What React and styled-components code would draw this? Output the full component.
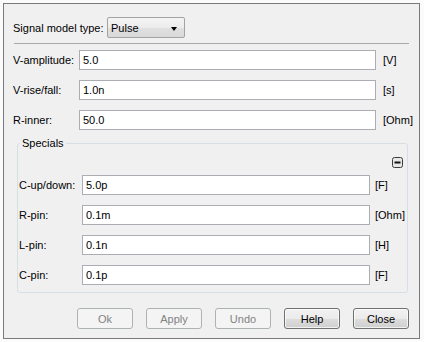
import React from 'react'
import styled, { createGlobalStyle } from 'styled-components'

const GlobalStyle = createGlobalStyle`
  html, body {
    margin: 0;
    padding: 0;
    background: #fbfbfb;
  }
  body {
    font-family: "Liberation Sans", Arial, sans-serif;
    font-size: 11px;
    color: #000;
  }
`

const Frame = styled.div`
  box-sizing: border-box;
  width: 417px;
  height: 336px;
  margin: 3px 0 0 3px;
  border: 1px solid #7a7a7a;
  background: #f0f0f0;
  padding: 13px 10px 0 9px;
  display: flex;
  flex-direction: column;
`

const TopRow = styled.div`
  display: flex;
  align-items: center;
  height: 21px;
`

const TopLabel = styled.span`
  width: 94px;
  white-space: nowrap;
`

const Combo = styled.div`
  box-sizing: border-box;
  width: 78px;
  height: 21px;
  border: 1px solid #a3a3a3;
  border-radius: 2px;
  background: linear-gradient(#f4f4f4 0%, #ececec 50%, #e0e0e0 51%, #d9d9d9 100%);
  display: flex;
  align-items: center;
  justify-content: space-between;
  padding: 0 7px 0 3px;
`

const Arrow = styled.span`
  width: 0;
  height: 0;
  border-left: 3.5px solid transparent;
  border-right: 3.5px solid transparent;
  border-top: 4px solid #000;
  margin-top: 2px;
`

const Separator = styled.div`
  height: 1px;
  background: #a9a9a9;
  margin: 5px 0 6px 1px;
`

const Fields = styled.div`
  display: grid;
  grid-template-columns: ${p => p.$label}px 1fr ${p => p.$unit}px;
  grid-auto-rows: 20px;
  row-gap: 10px;
  align-items: center;
`

const Label = styled.span`
  white-space: nowrap;
`

const Input = styled.input`
  box-sizing: border-box;
  height: 20px;
  width: 100%;
  margin: 0;
  border: 1px solid #abadb3;
  background: #fff;
  font: inherit;
  padding: 0 3px;
  outline: none;
`

const Unit = styled.span`
  padding-left: ${p => p.$gap}px;
  white-space: nowrap;
`

const Group = styled.fieldset`
  margin: 7px 1px 0 4px;
  padding: 0 0 7px 1px;
  border: 1px solid #d5dfe5;
  border-radius: 3px;
`

const Legend = styled.legend`
  margin-left: 1px;
  padding: 0 2px;
  line-height: 13px;
`

const GroupHeader = styled.div`
  display: flex;
  justify-content: flex-end;
  height: 11px;
  margin: 7px 4px 7px 0;
`

const CollapseButton = styled.svg`
  display: block;
`

const Buttons = styled.div`
  display: flex;
  justify-content: flex-end;
  gap: 13px;
  margin-top: 15px;
`

const Button = styled.button`
  box-sizing: border-box;
  width: 56px;
  height: 21px;
  margin: 0;
  padding: 0;
  font: inherit;
  border-radius: 3px;
  border: 1px solid ${p => (p.disabled ? '#adb2b5' : '#707070')};
  color: ${p => (p.disabled ? '#838383' : '#000')};
  background: ${p =>
    p.disabled
      ? '#f4f4f4'
      : 'linear-gradient(#f2f2f2 0%, #ebebeb 50%, #dddddd 51%, #cfcfcf 100%)'};
  box-shadow: ${p => (p.disabled ? 'none' : 'inset 0 0 0 1px rgba(255,255,255,0.7)')};
`

const mainFields = [
  { label: 'V-amplitude:', value: '5.0', unit: '[V]' },
  { label: 'V-rise/fall:', value: '1.0n', unit: '[s]' },
  { label: 'R-inner:', value: '50.0', unit: '[Ohm]' },
]

const specialFields = [
  { label: 'C-up/down:', value: '5.0p', unit: '[F]' },
  { label: 'R-pin:', value: '0.1m', unit: '[Ohm]' },
  { label: 'L-pin:', value: '0.1n', unit: '[H]' },
  { label: 'C-pin:', value: '0.1p', unit: '[F]' },
]

const FieldList = ({ fields, label, unit, gap }) => (
  <Fields $label={label} $unit={unit}>
    {fields.map(f => (
      <React.Fragment key={f.label}>
        <Label>{f.label}</Label>
        <Input defaultValue={f.value} />
        <Unit $gap={gap}>{f.unit}</Unit>
      </React.Fragment>
    ))}
  </Fields>
)

export default function App() {
  return (
    <>
      <GlobalStyle />
      <Frame>
        <TopRow>
          <TopLabel>Signal model type:</TopLabel>
          <Combo>
            <span>Pulse</span>
            <Arrow />
          </Combo>
        </TopRow>
        <Separator />
        <FieldList fields={mainFields} label={66} unit={33} gap={7} />
        <Group>
          <Legend>Specials</Legend>
          <GroupHeader>
            <CollapseButton width="11" height="11" viewBox="0 0 11 11">
              <rect x="0.5" y="0.5" width="10" height="10" rx="2" fill="#e8e8e8" stroke="#3a3a3a" />
              <rect x="2.5" y="4.5" width="6" height="2" fill="#111" />
            </CollapseButton>
          </GroupHeader>
          <FieldList fields={specialFields} label={63} unit={37} gap={5} />
        </Group>
        <Buttons>
          <Button disabled>Ok</Button>
          <Button disabled>Apply</Button>
          <Button disabled>Undo</Button>
          <Button>Help</Button>
          <Button>Close</Button>
        </Buttons>
      </Frame>
    </>
  )
}
